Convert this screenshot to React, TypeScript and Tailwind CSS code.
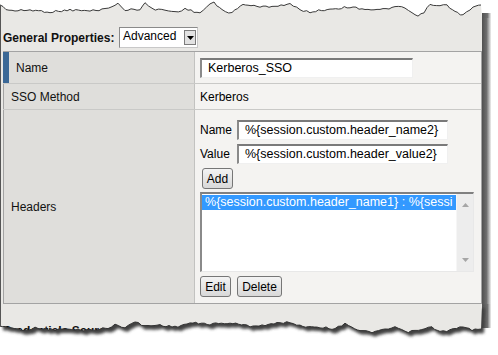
import type { ReactNode } from 'react'

type Pt = [number, number]

function noise(i: number) {
  const s = Math.sin(i * 12.9898 + 78.233) * 43758.5453
  return s - Math.floor(s)
}

// torn paper edge: walk between key points, wiggle a bit every 3px
function tornEdge(keys: Pt[], seed: number, dy = 0): Pt[] {
  const pts: Pt[] = []
  for (let k = 0; k < keys.length - 1; k++) {
    const [x0, y0] = keys[k]
    const [x1, y1] = keys[k + 1]
    const steps = Math.max(1, Math.round((x1 - x0) / 3))
    for (let s = 0; s < steps; s++) {
      const t = s / steps
      const n = (noise(seed + pts.length) - 0.5) * 2
      pts.push([x0 + (x1 - x0) * t, y0 + (y1 - y0) * t + n + dy])
    }
  }
  const last = keys[keys.length - 1]
  pts.push([last[0], last[1] + dy])
  return pts
}

const toPath = (pts: Pt[]) =>
  pts.map(([x, y], i) => `${i ? 'L' : 'M'}${x.toFixed(1)} ${y.toFixed(1)}`).join(' ')

const topKeys: Pt[] = [
  [0, 5], [6, 9], [15, 11], [30, 10], [50, 12], [70, 10], [90, 11], [105, 9], [112, 6], [118, 4],
  [125, 10], [140, 9], [145, 3], [152, 9], [165, 10], [175, 12], [185, 9], [200, 13], [210, 4],
  [214, 3], [222, 10], [232, 13], [243, 4], [248, 5], [260, 7], [275, 6], [290, 4], [300, 10],
  [310, 12], [330, 9], [350, 7], [365, 9], [380, 10], [395, 7], [405, 8], [412, 13], [418, 17],
  [424, 12], [430, 5], [440, 6], [447, 5], [455, 12], [463, 15], [470, 10], [476, 6], [481, 5],
]

const bottomKeys: Pt[] = [
  [0, 326], [8, 327], [15, 329], [25, 330], [35, 328], [45, 329], [55, 330], [65, 329], [75, 330],
  [90, 330], [100, 329], [108, 328], [115, 325], [125, 327], [135, 322], [145, 326], [160, 325],
  [175, 327], [190, 323], [210, 324], [230, 323], [250, 326], [265, 325], [280, 323], [290, 322],
  [300, 326], [320, 327], [335, 329], [345, 323], [352, 327], [360, 331], [372, 332], [385, 330],
  [395, 327], [405, 332], [415, 331], [425, 329], [432, 327], [440, 332], [450, 330], [463, 327],
  [472, 330], [481, 329],
]

const PANEL = '#e9e8e5'

function TopEdge() {
  const pts = tornEdge(topKeys, 3)
  const line = toPath(pts)
  return (
    <svg width="498" height="18" className="block">
      <defs>
        <linearGradient id="sh-top" x1="0" x2="1" y1="0" y2="0">
          <stop offset="0" stopColor="#505050" />
          <stop offset="0.6" stopColor="#6e6e6e" />
          <stop offset="1" stopColor="#f0f0f0" />
        </linearGradient>
      </defs>
      <rect x="482" y="13" width="9" height="5" fill="url(#sh-top)" />
      <path d={`${line} L482 18 L0 18 Z`} fill={PANEL} />
      <path d={line} fill="none" stroke="#3a3a3a" strokeWidth="1" />
      <line x1="0.5" y1="5" x2="0.5" y2="18" stroke="#555" />
    </svg>
  )
}

function BottomEdge() {
  const pts = tornEdge(bottomKeys, 11, -304)
  const line = toPath(pts)
  const shape = `M0 0 L482 0 ${[...pts].reverse().map(([x, y]) => `L${x.toFixed(1)} ${y.toFixed(1)}`).join(' ')} Z`
  return (
    <svg width="498" height="51" className="block">
      <defs>
        <linearGradient id="sh-bot" x1="0" x2="1" y1="0" y2="0">
          <stop offset="0" stopColor="#505050" />
          <stop offset="0.6" stopColor="#6e6e6e" />
          <stop offset="1" stopColor="#f0f0f0" />
        </linearGradient>
        <filter id="blur" x="-10%" y="-50%" width="120%" height="200%">
          <feGaussianBlur stdDeviation="1.6" />
        </filter>
        <clipPath id="paper">
          <path d={shape} />
        </clipPath>
      </defs>
      <rect x="482" y="0" width="9" height="24" fill="url(#sh-bot)" />
      <path d={shape} fill="#404040" transform="translate(3 4)" filter="url(#blur)" />
      <path d={shape} fill={PANEL} />
      <g clipPath="url(#paper)">
        <text x="3" y="31" fontFamily="Liberation Sans, Arial, sans-serif" fontSize="12" fontWeight="bold" fill="#111">
          Credentials Source
        </text>
      </g>
      <path d={line} fill="none" stroke="#333" strokeWidth="1" />
      <line x1="0.5" y1="0" x2="0.5" y2={pts[0][1]} stroke="#555" />
    </svg>
  )
}

function Field({ value, className = '' }: { value: string; className?: string }) {
  return (
    <div
      className={`flex h-5 items-center overflow-hidden whitespace-nowrap border-t-2 border-l-2 border-r border-b border-t-[#7a7a7a] border-l-[#8a8a8a] border-r-[#f0f0f0] border-b-[#f0f0f0] bg-white pl-[6px] text-[12.5px] text-black ${className}`}
    >
      {value}
    </div>
  )
}

function Btn({ children, className = '' }: { children: ReactNode; className?: string }) {
  return (
    <button
      type="button"
      className={`flex h-[21px] items-center justify-center rounded-[3px] border border-[#767676] bg-gradient-to-b from-[#f4f4f4] to-[#d8d8d8] text-[12px] text-black ${className}`}
    >
      {children}
    </button>
  )
}

function Row({
  label,
  children,
  height,
  active = false,
  last = false,
}: {
  label: string
  children: ReactNode
  height: string
  active?: boolean
  last?: boolean
}) {
  return (
    <div className={`flex ${height} ${last ? '' : 'border-b border-[#c9c9c7]'}`}>
      <div
        className={`flex w-[192px] shrink-0 items-center border-r border-r-[#c2c2c0] bg-[#dfdedb] pl-[7px] text-[12px] text-[#111] ${
          active ? 'border-l-[6px] border-l-[#3b6896]' : 'border-l border-l-[#a3a3a3]'
        }`}
      >
        {label}
      </div>
      <div className="flex-1 bg-[#f4f3f1]">{children}</div>
    </div>
  )
}

function Headers() {
  return (
    <div className="flex flex-col items-start pl-[5px] pt-[10px] text-[12px] text-black">
      <div className="flex h-5 items-center">
        <span className="w-[37px]">Name</span>
        <Field value="%{session.custom.header_name2}" className="w-[211px]" />
      </div>
      <div className="mt-1 flex h-5 items-center">
        <span className="w-[37px]">Value</span>
        <Field value="%{session.custom.header_value2}" className="w-[211px]" />
      </div>
      <Btn className="mt-1 ml-[2px] w-[31px]">Add</Btn>
      <div className="mt-[3px] flex h-[80px] w-[274px] border-t-2 border-l-2 border-r border-b border-t-[#808080] border-l-[#8a8a8a] border-r-[#e8e8e8] border-b-[#e8e8e8] bg-white">
        <div className="flex-1 overflow-hidden pt-px">
          <div className="h-[15px] overflow-hidden whitespace-nowrap bg-[#3399ff] pl-[3px] text-[12.5px] leading-[15px] text-white">
            %{'{'}session.custom.header_name1{'}'} : %{'{'}sessi
          </div>
        </div>
        <div className="flex w-[17px] flex-col items-center justify-between border-l border-[#f6f6f6] bg-[#ededed] py-[9px]">
          <svg width="7" height="4" viewBox="0 0 7 4">
            <path d="M0 4 L3.5 0 L7 4 Z" fill="#a6a6a6" />
          </svg>
          <svg width="7" height="4" viewBox="0 0 7 4">
            <path d="M0 0 L3.5 4 L7 0 Z" fill="#a6a6a6" />
          </svg>
        </div>
      </div>
      <div className="mt-1 flex gap-[6px]">
        <Btn className="w-[31px]">Edit</Btn>
        <Btn className="w-[45px]">Delete</Btn>
      </div>
    </div>
  )
}

export default function App() {
  return (
    <div className="h-[355px] w-[498px] overflow-hidden bg-white font-['Liberation_Sans',Arial,sans-serif]">
      <TopEdge />
      <div className="flex">
        <div className="w-[482px] border-l border-[#555] bg-[#e9e8e5] pl-[2px]">
          <div className="mt-[9px] flex h-[21px] items-center">
            <span className="w-[116px] text-[12px] font-bold text-[#111]">General Properties:</span>
            <div className="flex h-[21px] w-[79px] items-center justify-between border border-t-[#8a8a8a] border-l-[#8a8a8a] border-r-[#c8c8c8] border-b-[#c8c8c8] bg-white pl-[3px] pr-px">
              <span className="-mt-[3px] text-[12px] text-black">Advanced</span>
              <div className="flex h-[15px] w-[12px] items-center justify-center border border-[#7c7c7c] bg-[#e2e2e2]">
                <svg width="7" height="4" viewBox="0 0 7 4">
                  <path d="M0 0 L3.5 4 L7 0 Z" fill="#000" />
                </svg>
              </div>
            </div>
          </div>
          <div className="mt-[3px] w-[479px] border-t border-r border-b border-[#a3a3a3]">
            <Row label="Name" height="h-[32px]" active>
              <div className="flex h-full items-center pl-[5px]">
                <Field value="Kerberos_SSO" className="w-[213px]" />
              </div>
            </Row>
            <Row label="SSO Method" height="h-[26px]">
              <div className="flex h-full items-center pl-[5px] text-[12px] text-black">Kerberos</div>
            </Row>
            <Row label="Headers" height="h-[193px]" last>
              <Headers />
            </Row>
          </div>
        </div>
        <div className="w-[9px] bg-gradient-to-r from-[#505050] via-[#6e6e6e] to-[#f0f0f0]" />
      </div>
      <BottomEdge />
    </div>
  )
}
